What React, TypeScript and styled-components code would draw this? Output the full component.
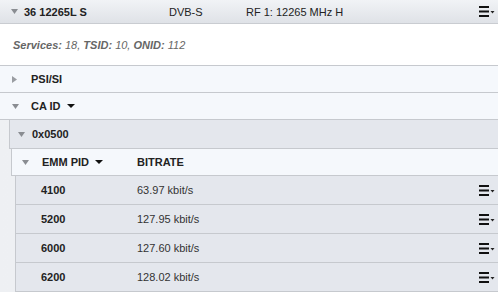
import React from "react";
import styled, { createGlobalStyle } from "styled-components";

const Global = createGlobalStyle`
  html, body { margin: 0; padding: 0; background: #ffffff; }
  body { font-family: "Liberation Sans", Arial, sans-serif; font-size: 11px; color: #222; }
`;

const Page = styled.div`
  width: 498px;
  height: 294px;
  overflow: hidden;
  background: #fff;
`;

const Header = styled.div`
  height: 23px;
  display: flex;
  align-items: center;
  background: linear-gradient(#f1f3f6, #dfe2e7);
  border-bottom: 1px solid #c9ccd1;
  padding-left: 11px;
  padding-right: 3px;
`;

const Title = styled.span`
  font-weight: bold;
  margin-left: 6px;
  width: 145px;
`;

const Plain = styled.span<{ $w?: number }>`
  width: ${(p) => (p.$w ? `${p.$w}px` : "auto")};
  color: #222;
`;

const Spacer = styled.div`
  flex: 1;
`;

const Info = styled.div`
  height: 41px;
  display: flex;
  align-items: center;
  padding-left: 13px;
  font-style: italic;
  color: #666;
  b { font-weight: bold; }
`;

const Tree = styled.div`
  border-top: 1px solid #c6c9ce;
`;

const Row = styled.div<{ $h: number; $grey?: boolean; $edge?: boolean }>`
  height: ${(p) => p.$h}px;
  display: flex;
  align-items: center;
  background: ${(p) => (p.$grey ? "#e4e7ed" : "#f5f8fc")};
  border-bottom: 1px solid #c6c9ce;
  border-left: ${(p) => (p.$edge ? "1px solid #c6c9ce" : "none")};
  padding-right: 3px;
`;

const Toggle = styled.span<{ $x: number }>`
  width: 8px;
  margin-left: ${(p) => p.$x}px;
  display: inline-flex;
  align-items: center;
`;

const Label = styled.span<{ $x: number; $w?: number }>`
  margin-left: ${(p) => p.$x}px;
  width: ${(p) => (p.$w ? `${p.$w}px` : "auto")};
  font-weight: bold;
  color: #222;
  display: inline-flex;
  align-items: center;
  white-space: nowrap;
`;

const Value = styled.span`
  color: #333;
`;

const Indent = styled.div<{ $pad: number }>`
  padding-left: ${(p) => p.$pad}px;
  background: linear-gradient(90deg, #eef0f3, #f5f7fa);
`;

const Down = () => (
  <svg width="7" height="5" viewBox="0 0 7 5">
    <path d="M0 0 L7 0 L3.5 5 Z" fill="#8a8d92" />
  </svg>
);

const Right = () => (
  <svg width="5" height="7" viewBox="0 0 5 7">
    <path d="M0 0 L5 3.5 L0 7 Z" fill="#9a9da2" />
  </svg>
);

const Caret = styled.span`
  display: inline-block;
  margin-left: 6px;
  width: 0;
  height: 0;
  border-left: 4px solid transparent;
  border-right: 4px solid transparent;
  border-top: 4px solid #111;
`;

const Menu = () => (
  <svg width="16" height="13" viewBox="0 0 16 13">
    <rect x="0" y="1" width="10" height="2" fill="#111" />
    <rect x="0" y="5.5" width="10" height="2" fill="#111" />
    <rect x="0" y="10" width="10" height="2" fill="#111" />
    <path d="M11.5 6 L15.5 6 L13.5 8.5 Z" fill="#222" />
  </svg>
);

const pids = [
  { pid: "4100", rate: "63.97 kbit/s" },
  { pid: "5200", rate: "127.95 kbit/s" },
  { pid: "6000", rate: "127.60 kbit/s" },
  { pid: "6200", rate: "128.02 kbit/s" },
];

export default function App() {
  return (
    <Page>
      <Global />
      <Header>
        <Down />
        <Title>36 12265L S</Title>
        <Plain $w={77}>DVB-S</Plain>
        <Plain>RF 1: 12265 MHz H</Plain>
        <Spacer />
        <Menu />
      </Header>
      <Info>
        <span>
          <b>Services:</b> 18, <b>TSID:</b> 10, <b>ONID:</b> 112
        </span>
      </Info>
      <Tree>
        <Row $h={26}>
          <Toggle $x={12}>
            <Right />
          </Toggle>
          <Label $x={11}>PSI/SI</Label>
        </Row>
        <Row $h={26}>
          <Toggle $x={12}>
            <Down />
          </Toggle>
          <Label $x={11}>
            CA ID
            <Caret />
          </Label>
        </Row>
        <Indent $pad={9}>
          <Row $h={28} $grey $edge>
            <Toggle $x={8}>
              <Down />
            </Toggle>
            <Label $x={6}>0x0500</Label>
          </Row>
          <Indent $pad={2}>
            <Row $h={26} $edge>
              <Toggle $x={10}>
                <Down />
              </Toggle>
              <Label $x={12} $w={95}>
                EMM PID
                <Caret />
              </Label>
              <Label $x={0}>BITRATE</Label>
            </Row>
            <Indent $pad={4}>
              {pids.map((p) => (
                <Row key={p.pid} $h={28} $grey $edge>
                  <Label $x={25} $w={96}>
                    {p.pid}
                  </Label>
                  <Value>{p.rate}</Value>
                  <Spacer />
                  <Menu />
                </Row>
              ))}
            </Indent>
          </Indent>
        </Indent>
      </Tree>
    </Page>
  );
}
